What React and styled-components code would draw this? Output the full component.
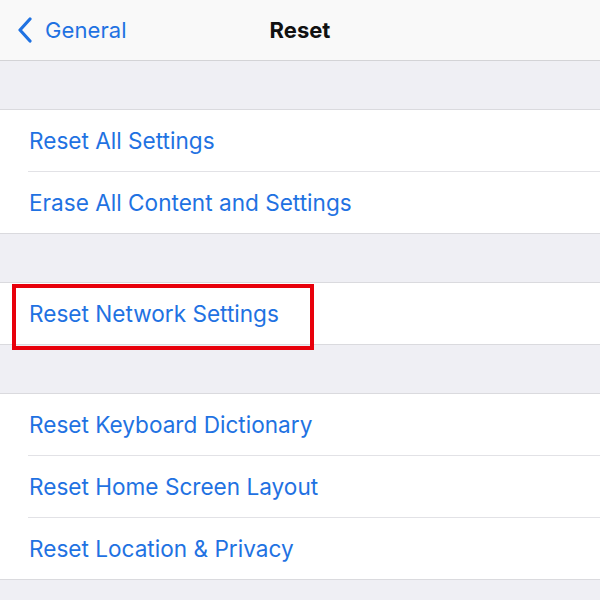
import React from "react";
import styled, { createGlobalStyle } from "styled-components";

const GlobalStyle = createGlobalStyle`
  html, body {
    margin: 0;
    padding: 0;
    background: #efeff4;
    font-family: Inter, "Liberation Sans", Arial, sans-serif;
    -webkit-font-smoothing: antialiased;
  }
`;

const Page = styled.div`
  width: 600px;
  height: 600px;
  overflow: hidden;
  background: #efeff4;
  display: flex;
  flex-direction: column;
`;

const NavBar = styled.header`
  height: 60px;
  flex-shrink: 0;
  background: #f9f9f9;
  border-bottom: 1px solid #d3d3d6;
  display: grid;
  grid-template-columns: 1fr auto 1fr;
  align-items: center;
`;

const BackButton = styled.div`
  display: flex;
  align-items: center;
  gap: 12px;
  padding-left: 17px;
  color: #1f72e2;
  font-size: 22px;
  letter-spacing: 0.1px;
`;

const Title = styled.div`
  font-size: 22px;
  font-weight: 700;
  color: #111;
`;

const Sections = styled.main`
  display: flex;
  flex-direction: column;
  gap: 48px;
  padding-top: 48px;
`;

const Group = styled.section`
  background: #fff;
  border-top: 1px solid #dadade;
  border-bottom: 1px solid #dadade;
`;

const Row = styled.div`
  position: relative;
  height: 61px;
  display: flex;
  align-items: center;
  padding-left: 29px;
  color: #1f72e2;
  font-size: 22.6px;

  & + & {
    border-top: 1px solid transparent;
  }
  & + &::before {
    content: "";
    position: absolute;
    top: -1px;
    left: 28px;
    right: 0;
    height: 1px;
    background: #e2e2e6;
  }
`;

const Highlight = styled.div`
  position: absolute;
  left: 12px;
  top: 1px;
  width: 302px;
  height: 66px;
  box-sizing: border-box;
  border: 4px solid #e8000b;
  z-index: 1;
`;

const Chevron = () => (
  <svg width="16" height="26" viewBox="0 0 16 26" fill="none">
    <path
      d="M13 2 L3 13 L13 24"
      stroke="#1f72e2"
      strokeWidth="3.2"
      strokeLinecap="round"
      strokeLinejoin="round"
    />
  </svg>
);

const groups = [
  ["Reset All Settings", "Erase All Content and Settings"],
  ["Reset Network Settings"],
  ["Reset Keyboard Dictionary", "Reset Home Screen Layout", "Reset Location & Privacy"],
];

export default function App() {
  return (
    <Page>
      <GlobalStyle />
      <NavBar>
        <BackButton>
          <Chevron />
          General
        </BackButton>
        <Title>Reset</Title>
        <div />
      </NavBar>
      <Sections>
        {groups.map((items, gi) => (
          <Group key={gi}>
            {items.map((label) => (
              <Row key={label}>
                {label === "Reset Network Settings" && <Highlight />}
                {label}
              </Row>
            ))}
          </Group>
        ))}
      </Sections>
    </Page>
  );
}
